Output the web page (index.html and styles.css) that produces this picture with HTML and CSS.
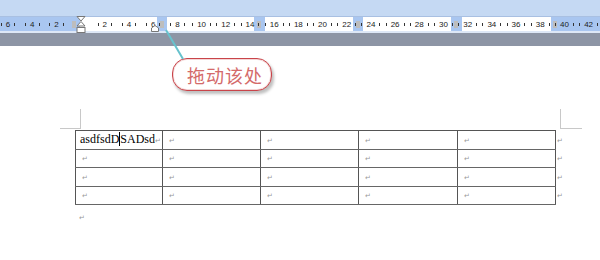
FILE: index.html
```html
<!DOCTYPE html>
<html lang="zh-CN">
<head>
    <meta charset="UTF-8">
    <title>表格</title>
    <link rel="stylesheet" href="styles.css">
</head>
<body>
    <div class="top-band"></div>
    <div class="ruler">
        <div class="ticks">
            <span class="cell"><i></i>6<i></i></span>
            <span class="cell"><i></i>4<i></i></span>
            <span class="cell"><i></i>2<i></i></span>
            <span class="cell"></span>
            <span class="cell"><i></i>2<i></i></span>
            <span class="cell"><i></i>4<i></i></span>
            <span class="cell"><i></i>6<i></i></span>
            <span class="cell"><i></i>8<i></i></span>
            <span class="cell"><i></i>10<i></i></span>
            <span class="cell"><i></i>12<i></i></span>
            <span class="cell"><i></i>14<i></i></span>
            <span class="cell"><i></i>16<i></i></span>
            <span class="cell"><i></i>18<i></i></span>
            <span class="cell"><i></i>20<i></i></span>
            <span class="cell"><i></i>22<i></i></span>
            <span class="cell"><i></i>24<i></i></span>
            <span class="cell"><i></i>26<i></i></span>
            <span class="cell"><i></i>28<i></i></span>
            <span class="cell"><i></i>30<i></i></span>
            <span class="cell"><i></i>32<i></i></span>
            <span class="cell"><i></i>34<i></i></span>
            <span class="cell"><i></i>36<i></i></span>
            <span class="cell"><i></i>38<i></i></span>
            <span class="cell"><i></i>40<i></i></span>
            <span class="cell"><i></i>42<i></i></span>
        </div>
        <!-- indent markers -->
        <svg class="indent" width="10" height="18" viewBox="0 0 10 18">
            <path d="M1 0.5 H9 L5 5 Z" fill="#fff" stroke="#777"/>
            <path d="M5 5.5 L9 10 H1 Z" fill="#fff" stroke="#777"/>
            <rect x="1" y="11.5" width="8" height="5" fill="#fff" stroke="#777"/>
        </svg>
        <svg class="right-indent" width="8" height="7" viewBox="0 0 8 7">
            <path d="M0.5 3 L4 0.5 L7.5 3 V6.5 H0.5 Z" fill="#fff" stroke="#777"/>
        </svg>
    </div>
    <div class="under-ruler"></div>
    <div class="grey-band"></div>

    <div class="page">
        <div class="callout">拖动该处</div>
        <div class="marks">
            <span class="mark-left"></span>
            <span class="mark-right"></span>
        </div>
        <table class="grid">
            <colgroup>
                <col class="c1"><col class="c2"><col class="c2"><col class="c3"><col class="c2"><col class="c-eor">
            </colgroup>
            <tr>
                <td class="first">asdfsdD<span class="caret"></span>SADsd<span class="pm">↵</span></td>
                <td><span class="pm">↵</span></td>
                <td><span class="pm">↵</span></td>
                <td><span class="pm">↵</span></td>
                <td><span class="pm">↵</span></td>
                <td class="eor"><span class="pm">↵</span></td>
            </tr>
            <tr>
                <td><span class="pm">↵</span></td>
                <td><span class="pm">↵</span></td>
                <td><span class="pm">↵</span></td>
                <td><span class="pm">↵</span></td>
                <td><span class="pm">↵</span></td>
                <td class="eor"><span class="pm">↵</span></td>
            </tr>
            <tr>
                <td><span class="pm">↵</span></td>
                <td><span class="pm">↵</span></td>
                <td><span class="pm">↵</span></td>
                <td><span class="pm">↵</span></td>
                <td><span class="pm">↵</span></td>
                <td class="eor"><span class="pm">↵</span></td>
            </tr>
            <tr>
                <td><span class="pm">↵</span></td>
                <td><span class="pm">↵</span></td>
                <td><span class="pm">↵</span></td>
                <td><span class="pm">↵</span></td>
                <td><span class="pm">↵</span></td>
                <td class="eor"><span class="pm">↵</span></td>
            </tr>
        </table>
        <p class="after"><span class="pm">↵</span></p>
    </div>

    <!-- pointer from the ruler tab to the callout -->
    <svg class="pointer" width="600" height="260">
        <line x1="166" y1="30" x2="183" y2="59" stroke="#67c2cd" stroke-width="2"/>
    </svg>
</body>
</html>
```

FILE: styles.css
```css
* {
    margin: 0;
    padding: 0;
}
body {
    width: 600px;
    height: 260px;
    overflow: hidden;
    background: #fff;
    font-family: "Liberation Sans", Arial, sans-serif;
    position: relative;
}
.top-band {
    height: 16px;
    background: #c5d9f3;
    border-bottom: 1px solid #a9c0e2;
}
.ruler {
    position: relative;
    height: 14px;
    background:
        linear-gradient(#bdbdbd, #bdbdbd) 160px 4px / 4px 7px no-repeat,
        linear-gradient(#bdbdbd, #bdbdbd) 257px 4px / 4px 7px no-repeat,
        linear-gradient(#bdbdbd, #bdbdbd) 356px 4px / 4px 7px no-repeat,
        linear-gradient(#bdbdbd, #bdbdbd) 454px 4px / 4px 7px no-repeat,
        linear-gradient(#bdbdbd, #bdbdbd) 553px 4px / 4px 7px no-repeat,
        linear-gradient(#bdbdbd, #bdbdbd) 72px 4px / 4px 7px no-repeat,
        linear-gradient(to right,
            #a9c6f0 0 80px, #fff 80px 157px,
            #a9c6f0 157px 167px, #fff 167px 254px,
            #a9c6f0 254px 265px, #fff 265px 353px,
            #a9c6f0 353px 363px, #fff 363px 451px,
            #a9c6f0 451px 462px, #fff 462px 551px,
            #a9c6f0 551px 600px);
}
.ticks {
    display: flex;
    margin-left: -4px;
    height: 14px;
}
.cell {
    flex: 0 0 24.2px;
    display: flex;
    justify-content: center;
    align-items: center;
    gap: 4px;
    font-size: 8px;
    color: #222;
    white-space: nowrap;
}
.cell i {
    display: block;
    width: 1px;
    height: 3px;
    background: #333;
}
.indent {
    position: absolute;
    left: 76px;
    top: -1px;
}
.right-indent {
    position: absolute;
    left: 151px;
    top: 8px;
}
.under-ruler {
    height: 2px;
    background: #dde7f6;
}
.grey-band {
    height: 13px;
    background: #8d95a5;
}
.page {
    padding-left: 60px;
    font-family: "Liberation Serif", "Times New Roman", serif;
}
.callout {
    margin: 12px 0 0 112px;
    width: 92px;
    height: 31px;
    border: 1.5px solid #c9444a;
    border-radius: 15px;
    box-shadow: 2px 3px 3px rgba(0, 0, 0, 0.25), inset 0 0 0 1px #f4d6d6;
    display: flex;
    align-items: center;
    justify-content: center;
    padding-left: 6px;
    font-family: "Noto Sans CJK SC", sans-serif;
    font-size: 18px;
    letter-spacing: 1px;
    color: #d46a6a;
    background: #fff;
}
.marks {
    display: flex;
    justify-content: space-between;
    width: 522px;
    height: 20px;
    margin-top: 18px;
}
.mark-left {
    width: 20px;
    border-right: 1px solid #c8c8c8;
    border-bottom: 1px solid #c8c8c8;
}
.mark-right {
    width: 21px;
    border-left: 1px solid #c8c8c8;
    border-bottom: 1px solid #c8c8c8;
}
.grid {
    margin: 1px 0 0 15px;
    border-collapse: collapse;
    table-layout: fixed;
    width: 500px;
}
.c1 { width: 87px; }
.c2 { width: 98px; }
.c3 { width: 99px; }
.c-eor { width: 20px; }
.grid tr {
    height: 18.5px;
}
.grid td {
    border: 1px solid #555;
    border-bottom-color: #666;
    padding: 0 0 0 6px;
    vertical-align: middle;
    font-size: 12px;
    line-height: 14px;
    white-space: nowrap;
}
.grid td.first {
    padding-left: 4px;
}
.grid td.eor {
    border: none;
    padding-left: 1px;
}
.caret {
    display: inline-block;
    width: 1px;
    height: 14px;
    background: #000;
    vertical-align: -3px;
}
.pm {
    font-family: "DejaVu Sans", sans-serif;
    font-size: 7px;
    color: #999;
}
.after {
    margin: 3px 0 0 19px;
    line-height: 14px;
}
.pointer {
    position: absolute;
    left: 0;
    top: 0;
    pointer-events: none;
}
```
